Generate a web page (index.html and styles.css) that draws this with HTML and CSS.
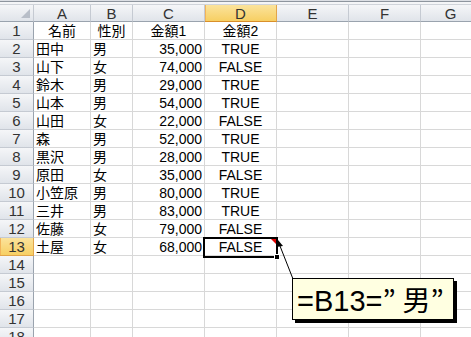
FILE: index.html
```html
<!DOCTYPE html>
<html lang="ja">
<head>
    <meta charset="UTF-8">
    <title>Sheet1</title>
    <link rel="stylesheet" href="styles.css">
</head>
<body>
    <div class="sheet">
        <div class="topbar"></div>

        <div class="row head">
            <div class="cell rh corner"><span class="tri"></span></div>
            <div class="cell ca">A</div>
            <div class="cell cb">B</div>
            <div class="cell cc">C</div>
            <div class="cell cd sel">D</div>
            <div class="cell ce">E</div>
            <div class="cell cf">F</div>
            <div class="cell cg">G</div>
        </div>

        <div id="rows"></div>

        <!-- 選択セル D13 -->
        <div class="selection">
            <span class="comment-mark"></span>
            <span class="handle"></span>
        </div>

        <svg class="pointer" width="471" height="337">
            <line x1="293" y1="279" x2="280" y2="246" stroke="#000" stroke-width="1"/>
            <polygon points="278,240 276,247 283,246" fill="#000"/>
        </svg>

        <div class="callout">=B13=<span class="q">”</span><span class="jp">男</span><span class="q">”</span></div>
    </div>

    <script src="script.js"></script>
</body>
</html>
```

FILE: styles.css
```css
* {
    margin: 0;
    padding: 0;
    box-sizing: border-box;
}

body {
    font-family: 'Liberation Sans', 'Noto Sans CJK JP', sans-serif;
    font-size: 14px;
    color: #000;
    background: #fff;
    width: 471px;
    height: 337px;
    overflow: hidden;
}

.sheet {
    position: relative;
    width: 471px;
    height: 337px;
    overflow: hidden;
}

.topbar {
    height: 5px;
    background: #f4f5f7;
    border-top: 1px solid #dcdfe4;
    border-bottom: 1px solid #d0d4da;
    box-shadow: inset 0 1px 0 #8e959e;
}

.row {
    display: flex;
    height: 18px;
}

.row.head {
    height: 17px;
}

.cell {
    flex: none;
    height: 100%;
    line-height: 17px;
    padding-top: 1px;
    border-right: 1px solid #d8d8d8;
    border-bottom: 1px solid #d8d8d8;
    white-space: nowrap;
    overflow: hidden;
}

.rh { width: 34px; }
.ca { width: 57px; }
.cb { width: 42px; }
.cc { width: 72px; }
.cd { width: 72px; }
.ce { width: 72px; }
.cf { width: 72px; }
.cg { width: 60px; }

.head .cell,
.rh {
    background: linear-gradient(#f5f6f8, #e0e4ea);
    border-right-color: #c5cad2;
    border-bottom-color: #c5cad2;
    color: #333;
    font-size: 15px;
    text-align: center;
    padding-top: 0;
    line-height: 17px;
}

.head .cell {
    border-bottom-color: #9aa3ae;
}

.rh {
    border-right-color: #9aa3ae;
    line-height: 18px;
}

.head .sel,
.rh.sel {
    background: linear-gradient(#fbe39c, #f7cf63);
    border-right-color: #e2a54a;
    border-bottom-color: #e2a54a;
    box-shadow: inset 1px 0 0 #f2b45a;
}

.head .sel {
    border-bottom-color: #d98f2a;
}

.corner {
    position: relative;
}

.tri {
    position: absolute;
    right: 3px;
    bottom: 3px;
    width: 0;
    height: 0;
    border-left: 9px solid transparent;
    border-bottom: 9px solid #b8bec8;
}

.left { padding-left: 2px; }
.center { text-align: center; }
.right { text-align: right; padding-right: 2px; }

.selection {
    position: absolute;
    left: 203px;
    top: 237px;
    width: 75px;
    height: 21px;
    border: 2px solid #000;
}

.comment-mark {
    position: absolute;
    right: 0;
    top: 0;
    width: 0;
    height: 0;
    border-left: 5px solid transparent;
    border-top: 5px solid #e00000;
}

.handle {
    position: absolute;
    right: -4px;
    bottom: -4px;
    width: 6px;
    height: 6px;
    background: #000;
    border: 1px solid #fff;
}

.pointer {
    position: absolute;
    left: 0;
    top: 0;
}

.callout {
    position: absolute;
    left: 292px;
    top: 278px;
    width: 162px;
    height: 42px;
    background: #ffffe1;
    border: 1px solid #000;
    box-shadow: 3px 3px 0 #000;
    font-size: 29px;
    line-height: 40px;
    padding-left: 4px;
    white-space: nowrap;
    overflow: hidden;
}

.q,
.jp {
    font-family: 'Noto Sans CJK JP', sans-serif;
    font-size: 28px;
}

.q {
    display: inline-block;
    width: 20px;
}
```

FILE: script.js
```js
// データ（A〜D列）
const data = [
    ['名前', '性別', '金額1', '金額2'],
    ['田中', '男', '35,000', 'TRUE'],
    ['山下', '女', '74,000', 'FALSE'],
    ['鈴木', '男', '29,000', 'TRUE'],
    ['山本', '男', '54,000', 'TRUE'],
    ['山田', '女', '22,000', 'FALSE'],
    ['森', '男', '52,000', 'TRUE'],
    ['黒沢', '男', '28,000', 'TRUE'],
    ['原田', '女', '35,000', 'FALSE'],
    ['小笠原', '男', '80,000', 'TRUE'],
    ['三井', '男', '83,000', 'TRUE'],
    ['佐藤', '女', '79,000', 'FALSE'],
    ['土屋', '女', '68,000', 'FALSE']
];

const rows = document.getElementById('rows');

for (let i = 1; i <= 18; i++) {
    const d = data[i - 1] || ['', '', '', ''];
    const header = i === 1;
    const row = document.createElement('div');
    row.className = 'row';
    row.innerHTML = `
        <div class="cell rh${i === 13 ? ' sel' : ''}">${i}</div>
        <div class="cell ca ${header ? 'center' : 'left'}">${d[0]}</div>
        <div class="cell cb ${header ? 'center' : 'left'}">${d[1]}</div>
        <div class="cell cc ${header ? 'center' : 'right'}">${d[2]}</div>
        <div class="cell cd center">${d[3]}</div>
        <div class="cell ce"></div>
        <div class="cell cf"></div>
        <div class="cell cg"></div>
    `;
    rows.appendChild(row);
}
```
